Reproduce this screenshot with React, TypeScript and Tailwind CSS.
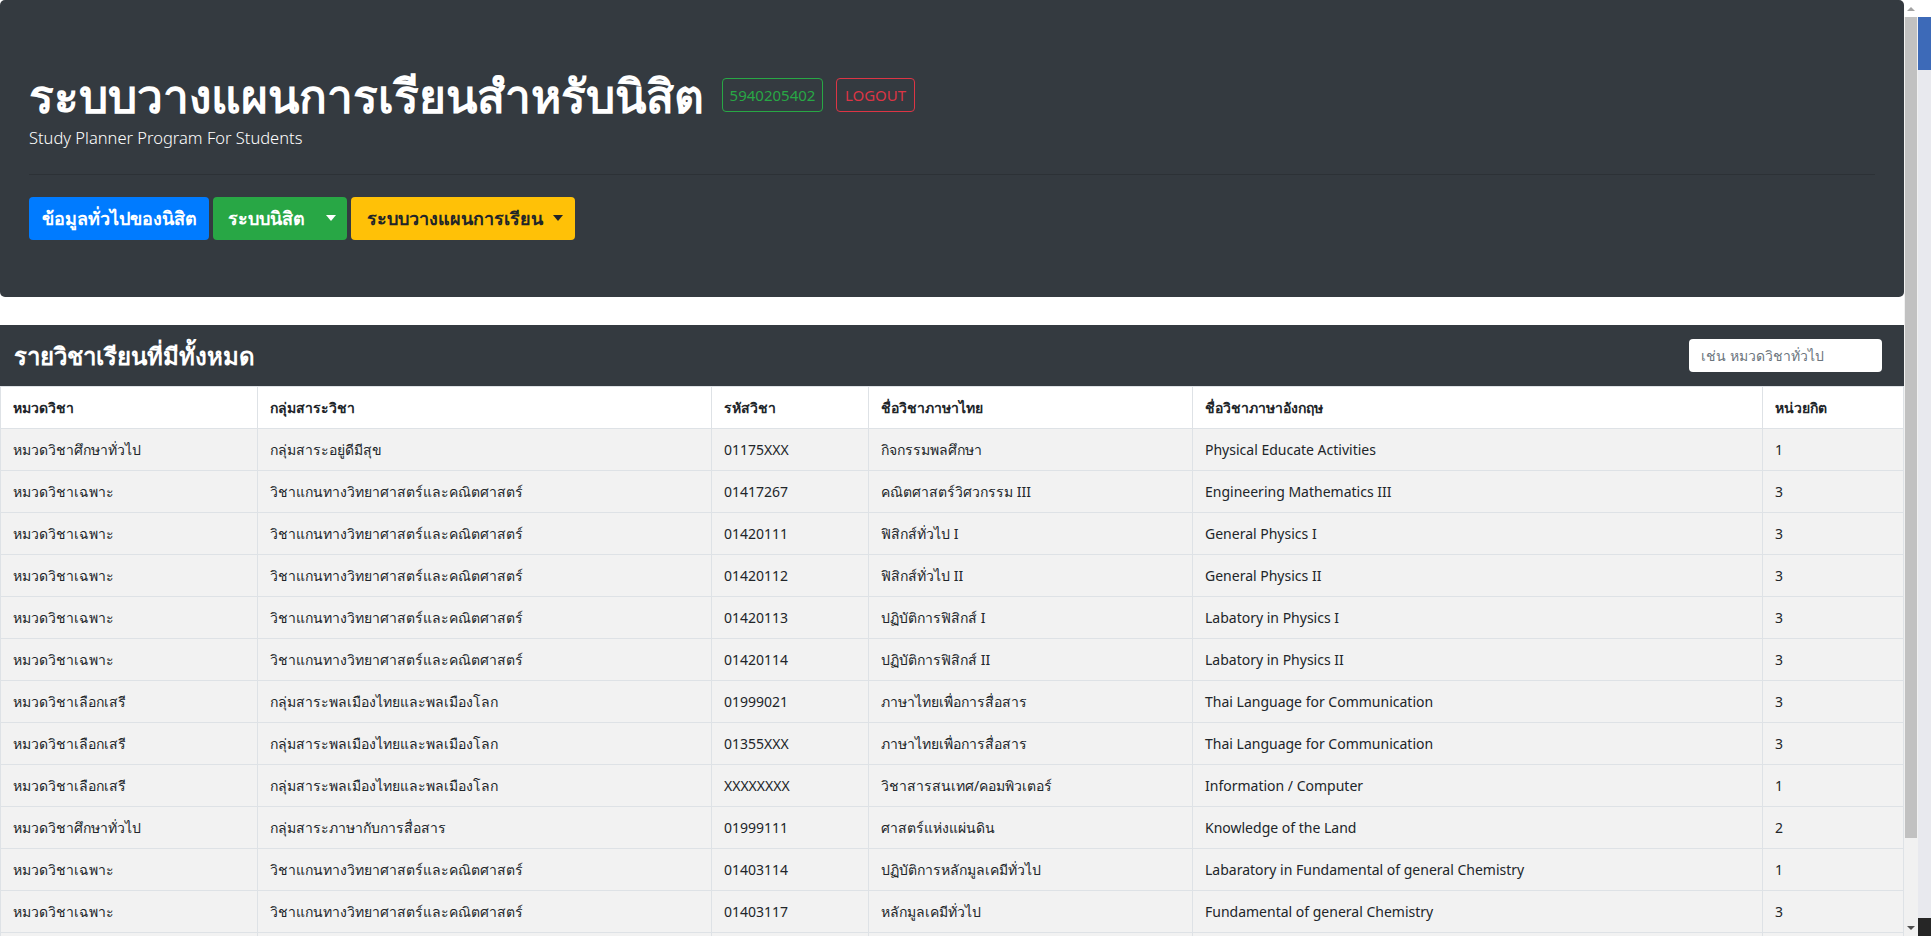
import React from 'react'

const FONT = '"Noto Sans", "Open Sans", sans-serif'

interface Course {
  group: string
  area: string
  code: string
  nameTh: string
  nameEn: string
  credit: number
}

const courses: Course[] = [
  { group: 'หมวดวิชาศึกษาทั่วไป', area: 'กลุ่มสาระอยู่ดีมีสุข', code: '01175XXX', nameTh: 'กิจกรรมพลศึกษา', nameEn: 'Physical Educate Activities', credit: 1 },
  { group: 'หมวดวิชาเฉพาะ', area: 'วิชาแกนทางวิทยาศาสตร์และคณิตศาสตร์', code: '01417267', nameTh: 'คณิตศาสตร์วิศวกรรม III', nameEn: 'Engineering Mathematics III', credit: 3 },
  { group: 'หมวดวิชาเฉพาะ', area: 'วิชาแกนทางวิทยาศาสตร์และคณิตศาสตร์', code: '01420111', nameTh: 'ฟิสิกส์ทั่วไป I', nameEn: 'General Physics I', credit: 3 },
  { group: 'หมวดวิชาเฉพาะ', area: 'วิชาแกนทางวิทยาศาสตร์และคณิตศาสตร์', code: '01420112', nameTh: 'ฟิสิกส์ทั่วไป II', nameEn: 'General Physics II', credit: 3 },
  { group: 'หมวดวิชาเฉพาะ', area: 'วิชาแกนทางวิทยาศาสตร์และคณิตศาสตร์', code: '01420113', nameTh: 'ปฏิบัติการฟิสิกส์ I', nameEn: 'Labatory in Physics I', credit: 3 },
  { group: 'หมวดวิชาเฉพาะ', area: 'วิชาแกนทางวิทยาศาสตร์และคณิตศาสตร์', code: '01420114', nameTh: 'ปฏิบัติการฟิสิกส์ II', nameEn: 'Labatory in Physics II', credit: 3 },
  { group: 'หมวดวิชาเลือกเสรี', area: 'กลุ่มสาระพลเมืองไทยและพลเมืองโลก', code: '01999021', nameTh: 'ภาษาไทยเพื่อการสื่อสาร', nameEn: 'Thai Language for Communication', credit: 3 },
  { group: 'หมวดวิชาเลือกเสรี', area: 'กลุ่มสาระพลเมืองไทยและพลเมืองโลก', code: '01355XXX', nameTh: 'ภาษาไทยเพื่อการสื่อสาร', nameEn: 'Thai Language for Communication', credit: 3 },
  { group: 'หมวดวิชาเลือกเสรี', area: 'กลุ่มสาระพลเมืองไทยและพลเมืองโลก', code: 'XXXXXXXX', nameTh: 'วิชาสารสนเทศ/คอมพิวเตอร์', nameEn: 'Information / Computer', credit: 1 },
  { group: 'หมวดวิชาศึกษาทั่วไป', area: 'กลุ่มสาระภาษากับการสื่อสาร', code: '01999111', nameTh: 'ศาสตร์แห่งแผ่นดิน', nameEn: 'Knowledge of the Land', credit: 2 },
  { group: 'หมวดวิชาเฉพาะ', area: 'วิชาแกนทางวิทยาศาสตร์และคณิตศาสตร์', code: '01403114', nameTh: 'ปฏิบัติการหลักมูลเคมีทั่วไป', nameEn: 'Labaratory in Fundamental of general Chemistry', credit: 1 },
  { group: 'หมวดวิชาเฉพาะ', area: 'วิชาแกนทางวิทยาศาสตร์และคณิตศาสตร์', code: '01403117', nameTh: 'หลักมูลเคมีทั่วไป', nameEn: 'Fundamental of general Chemistry', credit: 3 },
]

const columns = [
  { label: 'หมวดวิชา', w: 'w-[257px]' },
  { label: 'กลุ่มสาระวิชา', w: 'w-[454px]' },
  { label: 'รหัสวิชา', w: 'w-[157px]' },
  { label: 'ชื่อวิชาภาษาไทย', w: 'w-[324px]' },
  { label: 'ชื่อวิชาภาษาอังกฤษ', w: 'w-[570px]' },
  { label: 'หน่วยกิต', w: 'w-[141px]' },
]

function Caret({ color }: { color: string }) {
  return <span className={`inline-block w-0 h-0 border-x-[5px] border-x-transparent border-t-[6px] ${color}`} />
}

// ส่วนหัวของหน้า (jumbotron)
function Header() {
  return (
    <header className="bg-[#343a40] rounded-[5px] px-[29px] pt-[57px] h-[297px] text-white">
      <div className="flex items-center gap-[18px] h-[76px]">
        <h1 className="text-[46px] font-bold leading-none">ระบบวางแผนการเรียนสำหรับนิสิต</h1>
        <div className="flex gap-[13px]">
          <span className="h-[34px] w-[101px] flex items-center justify-center border border-[#28a745] text-[#28a745] rounded-[4px] text-[15px]">
            5940205402
          </span>
          <span className="h-[34px] w-[79px] flex items-center justify-center border border-[#dc3545] text-[#dc3545] rounded-[4px] text-[15px]">
            LOGOUT
          </span>
        </div>
      </div>
      <p className="text-[16.5px] font-light leading-none mt-[-3px]">Study Planner Program For Students</p>
      <hr className="border-0 border-t border-[#2c3136] mt-[27px]" />
      <div className="flex gap-[4px] mt-[22px]">
        <button className="h-[43px] w-[180px] bg-[#007bff] rounded-[4px] text-[18px] font-semibold text-white">
          ข้อมูลทั่วไปของนิสิต
        </button>
        <button className="h-[43px] w-[134px] bg-[#28a745] rounded-[4px] text-[18px] font-semibold text-white flex items-center justify-between pl-[15px] pr-[11px]">
          <span>ระบบนิสิต</span>
          <Caret color="border-t-white" />
        </button>
        <button className="h-[43px] w-[224px] bg-[#ffc107] rounded-[4px] text-[18px] font-semibold text-[#212529] flex items-center justify-between pl-[16px] pr-[12px]">
          <span>ระบบวางแผนการเรียน</span>
          <Caret color="border-t-[#212529]" />
        </button>
      </div>
    </header>
  )
}

function CourseTable() {
  return (
    <section className="mt-[28px]">
      <div className="bg-[#343a40] h-[61px] flex items-center justify-between pl-[14px] pr-[22px]">
        <h2 className="text-white text-[24px] font-semibold">รายวิชาเรียนที่มีทั้งหมด</h2>
        <input
          className="bg-white w-[193px] h-[33px] rounded-[4px] px-[12px] text-[14px] text-[#495057] placeholder:text-[#6c757d] outline-none"
          placeholder="เช่น หมวดวิชาทั่วไป"
        />
      </div>
      <table className="border-collapse w-[1903px] table-fixed text-[14px] text-[#212529]">
        <thead>
          <tr className="bg-white h-[42px]">
            {columns.map((c) => (
              <th key={c.label} className={`${c.w} border border-[#dee2e6] text-left font-bold px-[12px] py-0`}>
                {c.label}
              </th>
            ))}
          </tr>
        </thead>
        <tbody>
          {courses.map((c, i) => (
            <tr key={i} className="bg-[#f2f2f2] h-[42px]">
              <td className="border border-[#dee2e6] px-[12px] py-0">{c.group}</td>
              <td className="border border-[#dee2e6] px-[12px] py-0">{c.area}</td>
              <td className="border border-[#dee2e6] px-[12px] py-0">{c.code}</td>
              <td className="border border-[#dee2e6] px-[12px] py-0">{c.nameTh}</td>
              <td className="border border-[#dee2e6] px-[12px] py-0">{c.nameEn}</td>
              <td className="border border-[#dee2e6] px-[12px] py-0">{c.credit}</td>
            </tr>
          ))}
          {/* แถวถัดไปที่ถูกตัดอยู่ขอบล่างของหน้าจอ */}
          <tr className="bg-[#f2f2f2] h-[42px]">
            {columns.map((c) => (
              <td key={c.label} className="border border-[#dee2e6]" />
            ))}
          </tr>
        </tbody>
      </table>
    </section>
  )
}

// แถบเลื่อนของเบราว์เซอร์ในภาพ
function Scrollbar() {
  return (
    <div className="flex h-full shrink-0">
      <div className="w-[14px] flex flex-col bg-[#f1f1f1]">
        <div className="h-[17px] bg-white flex items-center justify-center">
          <span className="w-0 h-0 border-x-[4px] border-x-transparent border-b-[4px] border-b-[#a3a3a3]" />
        </div>
        <div className="h-[821px] bg-[#c1c1c1] mx-[1px]" />
        <div className="flex-1 flex items-end justify-center pb-[6px]">
          <span className="w-0 h-0 border-x-[4px] border-x-transparent border-t-[4px] border-t-[#505050]" />
        </div>
      </div>
      <div className="w-[13px] flex flex-col bg-[#e8e9ee]">
        <div className="h-[17px] bg-white" />
        <div className="h-[53px] bg-[#3d6ab8]" />
        <div className="flex-1" />
        <div className="h-[18px] bg-[#262626]" />
      </div>
    </div>
  )
}

export default function App() {
  return (
    <div className="flex h-[936px] w-[1931px] overflow-hidden bg-white" style={{ fontFamily: FONT }}>
      <main className="w-[1904px] shrink-0 overflow-hidden">
        <Header />
        <CourseTable />
      </main>
      <Scrollbar />
    </div>
  )
}
